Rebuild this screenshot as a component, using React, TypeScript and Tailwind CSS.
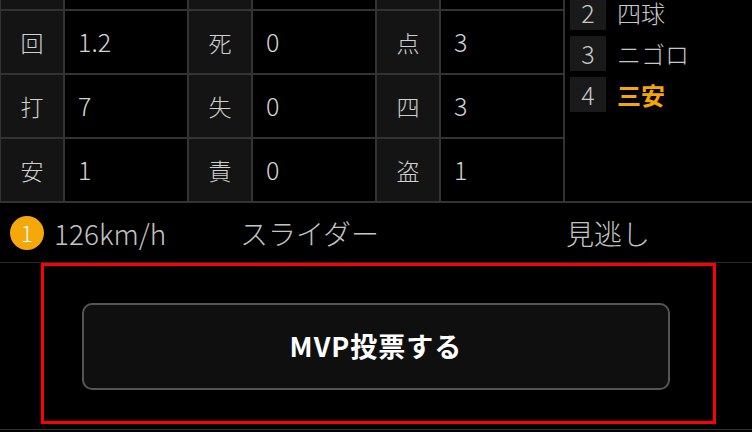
import React from "react";

const font = { fontFamily: '"Noto Sans CJK JP", "Noto Sans", sans-serif' };

const rows: [string, string][][] = [
  [["", ""], ["", ""], ["", ""]],
  [["回", "1.2"], ["死", "0"], ["点", "3"]],
  [["打", "7"], ["失", "0"], ["四", "3"]],
  [["安", "1"], ["責", "0"], ["盗", "1"]],
];

const plays: { n: string; t: string; hi?: boolean }[] = [
  { n: "", t: "" },
  { n: "2", t: "四球" },
  { n: "3", t: "ニゴロ" },
  { n: "4", t: "三安", hi: true },
];

export default function App() {
  return (
    <div className="w-[752px] h-[432px] overflow-hidden bg-black text-[#cccccc] font-light" style={font}>
      <div className="-mt-[53px] flex border-b-2 border-[#333333]">
        <div className="grid grid-cols-[62px_122px_62px_122px_62px_122px] gap-[2px] bg-[#333333] pl-[1px] pr-[2px]">
          {rows.map((r, ri) =>
            r.map(([l, v], ci) => (
              <React.Fragment key={ri + "-" + ci}>
                <div className="h-[62px] bg-[#141414] flex items-center justify-center text-[23px] text-[#d0d0d0]">
                  {l}
                </div>
                <div className="h-[62px] bg-black flex items-center pl-[13px] text-[25px] text-[#d4d4d4]">
                  {v}
                </div>
              </React.Fragment>
            ))
          )}
        </div>
        <div className="flex-1 flex flex-col gap-[6px] pt-[7px] pl-[5px]">
          {plays.map((p, i) => (
            <div key={i} className="flex items-center h-[35px]">
              <div className="w-[36px] h-[35px] bg-[#1a1a1a] flex items-center justify-center text-[25px] text-[#c8c8c8]">
                {p.n}
              </div>
              <div
                className={
                  "ml-[11px] text-[24px] " +
                  (p.hi ? "text-[#f7a800] font-bold" : "text-[#c8c8c8]")
                }
              >
                {p.t}
              </div>
            </div>
          ))}
        </div>
      </div>

      <div className="h-[60px] flex items-center border-b border-[#2c2c2c] pl-[10px]">
        <div className="w-[230px] flex items-center">
          <div className="w-[34px] h-[34px] rounded-full bg-[#f5a80a] flex items-center justify-center text-white text-[22px]">
            1
          </div>
          <div className="ml-[10px] text-[28px] text-[#c4c4c4]">126km/h</div>
        </div>
        <div className="w-[326px] text-[28px] text-[#c4c4c4]">スライダー</div>
        <div className="text-[28px] text-[#c4c4c4]">見逃し</div>
      </div>

      <div className="relative h-[167px] border-b border-[#333333] flex items-center justify-center">
        <button className="w-[588px] h-[87px] rounded-[10px] border-2 border-[#555555] bg-[#0f0f0f] text-white text-[27px] tracking-[1px] font-bold flex items-center justify-center">
          MVP投票する
        </button>
        <div className="absolute left-[41px] top-0 w-[675px] h-[161px] border-[3px] border-[#ff0000] pointer-events-none" />
      </div>
    </div>
  );
}
